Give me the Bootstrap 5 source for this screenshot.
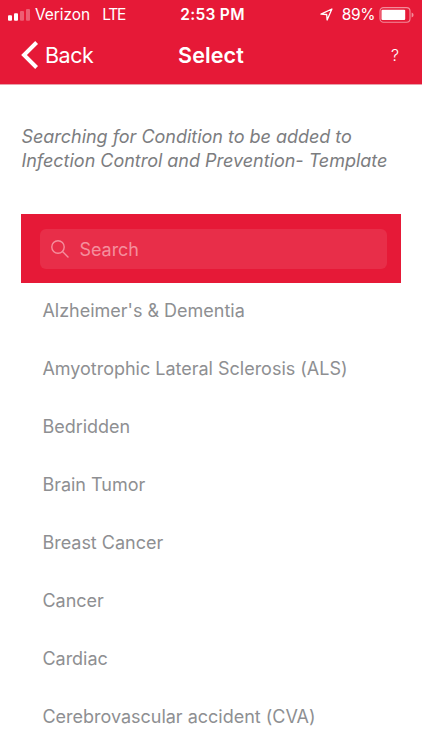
<!DOCTYPE html>
<html lang="en">
<head>
<meta charset="utf-8">
<meta name="viewport" content="width=device-width, initial-scale=1">
<title>Select</title>
<link href="https://cdn.jsdelivr.net/npm/bootstrap@5.3.0/dist/css/bootstrap.min.css" rel="stylesheet">
<style>
  :root { --brand: #e61937; }
  body { font-family: Inter, "Liberation Sans", sans-serif; height: 750px; background: #fff; overflow: hidden; }
  svg { display: block; flex: none; }
  .app-header { background: var(--brand); height: 84px; box-shadow: 0 1px 0 #e8a0ab; }
  .three-part { display: grid; grid-template-columns: 1fr auto 1fr; align-items: center; }
  .status-bar { height: 28px; padding: 0 8px 0 8px; font-size: 15.5px; line-height: 28px; }
  .carrier { letter-spacing: -.05px; margin-left: 5px; }
  .network { letter-spacing: -1.2px; margin-left: 12px; }
  .clock { letter-spacing: .3px; font-weight: 600; padding: 1px 0 0 3px; }
  .percent { letter-spacing: -.4px; margin: 1px 4px 0 9px; }
  .title-bar { height: 54px; padding: 0 23px 0 21px; line-height: 54px; }
  .back-label { font-size: 21.5px; letter-spacing: -.45px; margin-left: 6px; }
  .screen-title { font-size: 21.5px; font-weight: 600; letter-spacing: .1px; padding-left: 2px; }
  .help { font-size: 16px; font-weight: 300; }
  .content-area { padding: 41px 21px 0 21.4px; }
  .intro { font-size: 18px; line-height: 24px; font-style: italic; color: #7c7d7f; height: 89px; white-space: nowrap; letter-spacing: -.02px; }
  .search-panel { background: var(--brand); height: 69px; padding: 15px 13.6px 14px 18.6px; }
  .search-field { background: #e82e49; border-radius: 6px; padding-left: 11px; font-size: 18px; color: #f58e9d; gap: 10.5px; }
  .search-hint { letter-spacing: -.05px; }
  .conditions { --bs-list-group-bg: transparent; }
  .condition { height: 58px; padding: 0 0 0 21px; line-height: 56px; font-size: 18px; letter-spacing: -.01px; color: #8e8f92; border: 0; white-space: nowrap; }
</style>
<script src="https://cdn.jsdelivr.net/npm/bootstrap@5.3.0/dist/js/bootstrap.bundle.min.js"></script>
</head>
<body>
<header class="app-header text-white">
  <div class="status-bar three-part">
    <div class="d-flex align-items-center">
      <svg width="22" height="12" viewBox="0 0 22 12" fill="#fff"><rect y="6.2" width="4" height="5.5" rx="1"/><rect x="6" y="4.2" width="4" height="7.5" rx="1"/><rect x="12" y="2" width="4" height="9.7" rx="1" opacity=".3"/><rect x="18" y="0" width="4" height="11.7" rx="1" opacity=".3"/></svg>
      <span class="carrier">Verizon</span><span class="network">LTE</span>
    </div>
    <span class="clock">2:53 PM</span>
    <div class="d-flex align-items-center justify-content-end">
      <svg width="13" height="13" viewBox="0 0 13 13" fill="none" stroke="#fff" stroke-width="1.3" stroke-linejoin="round"><path d="M1 6.2 11.9 1 7.1 12 6.7 6.5Z"/></svg>
      <span class="percent">89%</span>
      <svg width="35" height="16" viewBox="0 0 35 16"><rect x="1" y=".6" width="30" height="14.6" rx="3.5" fill="none" stroke="#fff" stroke-opacity=".5" stroke-width="1.1"/><rect x="2.5" y="2.7" width="23.7" height="10.4" rx="1" fill="#fff"/><path d="M32.6 5.5q2 .6 2 2.5t-2 2.5Z" fill="#fff" opacity=".5"/></svg>
    </div>
  </div>
  <nav class="title-bar three-part">
    <a class="d-flex align-items-center text-white text-decoration-none" href="#"><svg width="18" height="28" viewBox="0 0 18 28" fill="none" stroke="#fff" stroke-width="4"><path d="M15.6 1.5 3 14 15.6 26.5"/></svg><span class="back-label">Back</span></a>
    <span class="screen-title">Select</span>
    <span class="help text-end">?</span>
  </nav>
</header>
<main class="content-area">
  <p class="intro mb-0">Searching for Condition to be added to<br>Infection Control and Prevention- Template</p>
  <div class="search-panel">
    <div class="search-field d-flex align-items-center h-100">
      <svg width="18" height="18" viewBox="0 0 18 18" fill="none" stroke="#f58e9d" stroke-width="1.4" stroke-linecap="round"><circle cx="7" cy="7" r="6.2"/><path d="m11.5 11.5 5.5 5.5"/></svg>
      <span class="search-hint">Search</span>
    </div>
  </div>
  <ul class="conditions list-group list-group-flush">
    <li class="condition list-group-item">Alzheimer's &amp; Dementia</li>
    <li class="condition list-group-item">Amyotrophic Lateral Sclerosis (ALS)</li>
    <li class="condition list-group-item">Bedridden</li>
    <li class="condition list-group-item">Brain Tumor</li>
    <li class="condition list-group-item">Breast Cancer</li>
    <li class="condition list-group-item">Cancer</li>
    <li class="condition list-group-item">Cardiac</li>
    <li class="condition list-group-item">Cerebrovascular accident (CVA)</li>
  </ul>
</main>
</body>
</html>
